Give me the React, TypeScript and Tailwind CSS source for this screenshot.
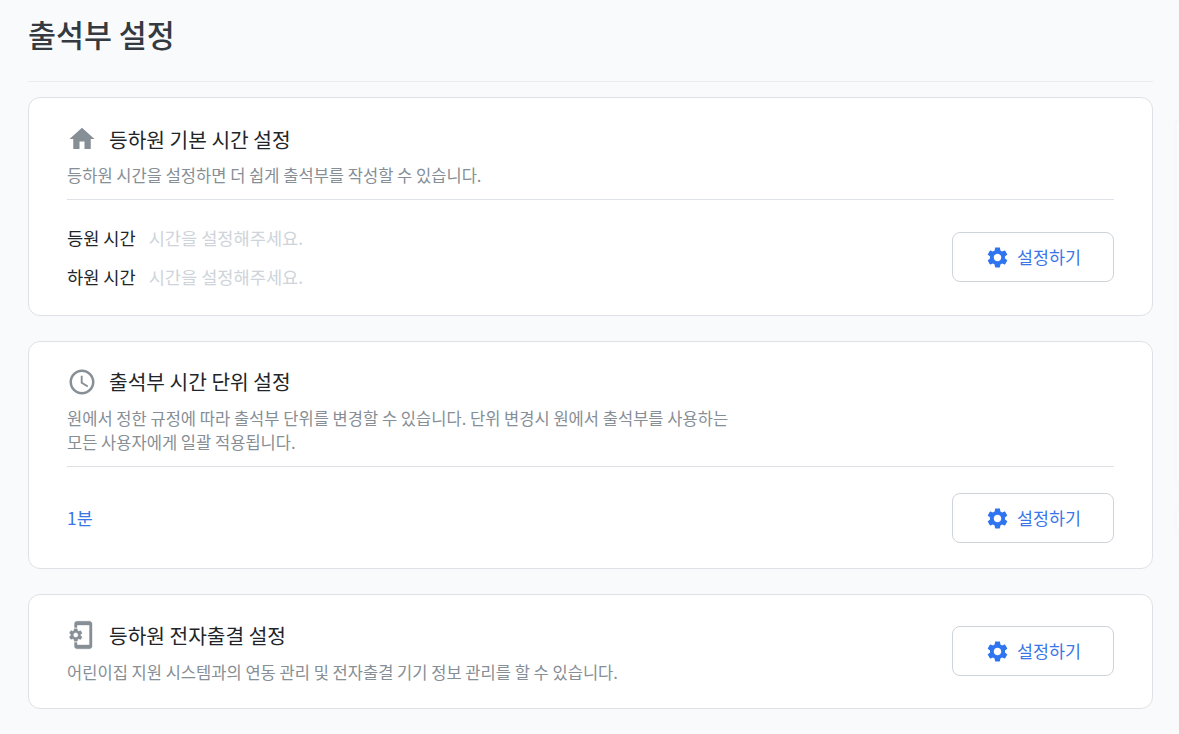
import * as React from 'react';

const GEAR =
  'M19.14 12.94c.04-.3.06-.61.06-.94 0-.32-.02-.64-.07-.94l2.03-1.58c.18-.14.23-.41.12-.61l-1.92-3.32c-.12-.22-.37-.29-.59-.22l-2.39.96c-.5-.38-1.03-.7-1.62-.94l-.36-2.54c-.04-.24-.24-.41-.48-.41h-3.84c-.24 0-.43.17-.47.41l-.36 2.54c-.59.24-1.13.57-1.62.94l-2.39-.96c-.22-.08-.47 0-.59.22L2.74 8.87c-.12.21-.08.47.12.61l2.03 1.58c-.05.3-.09.63-.09.94s.02.64.07.94l-2.03 1.58c-.18.14-.23.41-.12.61l1.92 3.32c.12.22.37.29.59.22l2.39-.96c.5.38 1.03.7 1.62.94l.36 2.54c.05.24.24.41.48.41h3.84c.24 0 .44-.17.47-.41l.36-2.54c.59-.24 1.13-.56 1.62-.94l2.39.96c.22.08.47 0 .59-.22l1.92-3.32c.12-.22.07-.47-.12-.61l-2.01-1.58zM12 15.6c-1.98 0-3.6-1.62-3.6-3.6s1.62-3.6 3.6-3.6 3.6 1.62 3.6 3.6-1.62 3.6-3.6 3.6z';

const HomeIcon = () => (
  <svg viewBox="0 0 24 24" className="w-[30px] h-[30px] fill-[#868e96] shrink-0">
    <path d="M10 20v-6h4v6h5v-8h3L12 3 2 12h3v8z" />
  </svg>
);

const ClockIcon = () => (
  <svg viewBox="0 -0.8 24 24" className="w-[30px] h-[30px] fill-[#868e96] shrink-0">
    <path d="M11.99 2C6.47 2 2 6.48 2 12s4.47 10 9.99 10C17.52 22 22 17.52 22 12S17.52 2 11.99 2zM12 20c-4.42 0-8-3.58-8-8s3.58-8 8-8 8 3.58 8 8-3.58 8-8 8z" />
    <path d="M12.5 7H11v6l5.25 3.15.75-1.23-4.5-2.67z" />
  </svg>
);

const DeviceIcon = () => (
  <svg viewBox="1 0 24 24" className="w-[30px] h-[30px] fill-[#868e96] stroke-[#868e96] stroke-[0.3] shrink-0">
    <path d="M11.8 12.5v-1l1.1-.8c.1-.1.1-.2.1-.3l-1-1.7c-.1-.1-.2-.2-.3-.1l-1.3.4c-.3-.2-.6-.4-.9-.5l-.2-1.3c0-.1-.1-.2-.3-.2H7c-.1 0-.2.1-.3.2l-.2 1.3c-.3.1-.6.3-.9.5l-1.3-.5c-.1 0-.2 0-.3.1l-1 1.7c-.1.1 0 .2.1.3l1.1.8v1l-1.1.8c-.1.2-.1.3-.1.4l1 1.7c.1.1.2.2.3.1l1.4-.4c.3.2.6.4.9.5l.2 1.3c0 .1.1.2.2.2h2c.1 0 .2-.1.3-.2l.2-1.3c.3-.1.6-.3.9-.5l1.3.5c.1 0 .2 0 .3-.1l1-1.7c.1-.1 0-.2-.1-.3l-1.1-.9zM8 14c-1.1 0-2-.9-2-2s.9-2 2-2 2 .9 2 2-.9 2-2 2zM19 1H9c-1.1 0-2 .9-2 2v3h2V4h10v16H9v-2H7v3c0 1.1.9 2 2 2h10c1.1 0 2-.9 2-2V3c0-1.1-.9-2-2-2z" />
  </svg>
);

const SettingButton = () => (
  <button className="flex items-center justify-center gap-[7px] w-[162px] h-[50px] bg-white border border-[#ced4da] rounded-lg text-[17.4px] text-[#3a76e8]">
    <svg viewBox="0 0 24 24" className="w-[25px] h-[25px] fill-[#2f75f0]">
      <path d={GEAR} />
    </svg>
    설정하기
  </button>
);

const CardHead = ({ icon, title }: { icon: React.ReactNode; title: string }) => (
  <div className="flex items-center h-[30px] gap-[12px] text-[20.3px] text-[#212529]">
    {icon}
    <h2 className="font-normal">{title}</h2>
  </div>
);

const timeRows = ['등원 시간', '하원 시간'];

export default function App() {
  return (
    <div className="relative overflow-hidden min-h-[734px] bg-[#f9fafc] px-[28px] pr-[26px] font-['Noto_Sans_CJK_KR',sans-serif]">
      <h1 className="h-[82px] pt-[11px] border-b border-[#e9ecef] text-[30.4px] leading-[46px] font-medium text-[#343a40]">
        출석부 설정
      </h1>

      <section className="mt-[15px] h-[219px] bg-white border border-[#dee2e6] rounded-xl px-[38px] pt-[26px]">
        <CardHead icon={<HomeIcon />} title="등하원 기본 시간 설정" />
        <p className="mt-[9px] text-[16.55px] leading-[24px] text-[#868e96]">
          등하원 시간을 설정하면 더 쉽게 출석부를 작성할 수 있습니다.
        </p>
        <div className="mt-[12px] border-t border-[#dee2e6] flex items-start justify-between pt-[26px]">
          <div className="flex flex-col gap-[15px]">
            {timeRows.map((label) => (
              <div key={label} className="flex gap-[13px] text-[17.6px] leading-[24px]">
                <span className="text-[#212529]">{label}</span>
                <span className="text-[#ced4da]">시간을 설정해주세요.</span>
              </div>
            ))}
          </div>
          <div className="mt-[6px]">
            <SettingButton />
          </div>
        </div>
      </section>

      <section className="mt-[25px] h-[228px] bg-white border border-[#dee2e6] rounded-xl px-[38px] pt-[24px]">
        <CardHead icon={<ClockIcon />} title="출석부 시간 단위 설정" />
        <p className="mt-[10px] text-[16.55px] leading-[24px] text-[#868e96]">
          원에서 정한 규정에 따라 출석부 단위를 변경할 수 있습니다. 단위 변경시 원에서 출석부를 사용하는
          <br />
          모든 사용자에게 일괄 적용됩니다.
        </p>
        <div className="mt-[12px] border-t border-[#dee2e6] flex items-center justify-between pt-[26px]">
          <span className="text-[17.4px] text-[#3a76e8]">1분</span>
          <SettingButton />
        </div>
      </section>

      <section className="mt-[25px] h-[115px] bg-white border border-[#dee2e6] rounded-xl px-[38px] pt-[25px] flex items-start justify-between">
        <div>
          <CardHead icon={<DeviceIcon />} title="등하원 전자출결 설정" />
          <p className="mt-[10px] text-[16.55px] leading-[24px] text-[#868e96]">
            어린이집 지원 시스템과의 연동 관리 및 전자출결 기기 정보 관리를 할 수 있습니다.
          </p>
        </div>
        <div className="pt-[6px]">
          <SettingButton />
        </div>
      </section>

      {/* side panel peeking in at the window edge */}
      <div className="absolute left-[1177px] top-[118px] w-[40px] h-[368px] rounded-lg bg-[#fbfcfd] shadow-[0_0_8px_rgba(0,0,0,0.03)]" />
      <div className="absolute left-[1177px] top-[505px] w-[40px] h-[30px] rounded-lg bg-[#fbfcfd] shadow-[0_0_8px_rgba(0,0,0,0.03)]" />
    </div>
  );
}
